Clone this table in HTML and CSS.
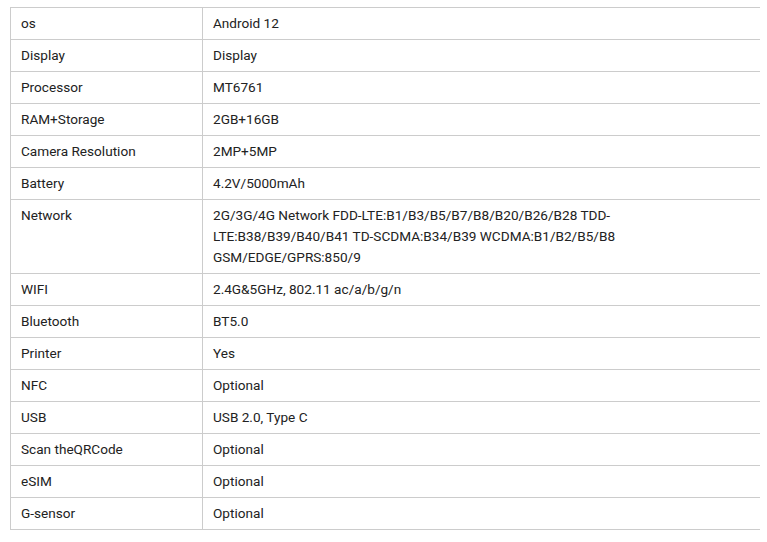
FILE: index.html
```html
<!DOCTYPE html>
<html lang="en">
<head>
  <meta charset="UTF-8" />
  <title>Specifications</title>
  <link rel="stylesheet" href="styles.css">
</head>
<body>
  <div class="spec-wrap">
    <table class="spec-table">
      <colgroup>
        <col class="col-name">
        <col class="col-value">
      </colgroup>
      <tbody>
        <tr><td>os</td><td>Android 12</td></tr>
        <tr><td>Display</td><td>Display</td></tr>
        <tr><td>Processor</td><td>MT6761</td></tr>
        <tr><td>RAM+Storage</td><td>2GB+16GB</td></tr>
        <tr><td>Camera Resolution</td><td>2MP+5MP</td></tr>
        <tr><td>Battery</td><td>4.2V/5000mAh</td></tr>
        <tr><td>Network</td><td><div class="long">2G/3G/4G Network FDD-LTE:B1/B3/B5/B7/B8/B20/B26/B28 TDD-LTE:B38/B39/B40/B41 TD-SCDMA:B34/B39 WCDMA:B1/B2/B5/B8 GSM/EDGE/GPRS:850/9</div></td></tr>
        <tr><td>WIFI</td><td>2.4G&amp;5GHz, 802.11 ac/a/b/g/n</td></tr>
        <tr><td>Bluetooth</td><td>BT5.0</td></tr>
        <tr><td>Printer</td><td>Yes</td></tr>
        <tr><td>NFC</td><td>Optional</td></tr>
        <tr><td>USB</td><td>USB 2.0, Type C</td></tr>
        <tr><td>Scan theQRCode</td><td>Optional</td></tr>
        <tr><td>eSIM</td><td>Optional</td></tr>
        <tr><td>G-sensor</td><td>Optional</td></tr>
      </tbody>
    </table>
  </div>
</body>
</html>
```

FILE: styles.css
```css
* {
  box-sizing: border-box;
  margin: 0;
  padding: 0;
}
html, body {
  background: #fff;
  font-family: Roboto, "Liberation Sans", sans-serif;
  font-size: 13.6px;
  color: #222;
}
body {
  padding: 7px 0 0 10px;
}

.spec-wrap {
  width: 750px;
  overflow: hidden;
}
.spec-table {
  width: 750px;
  table-layout: fixed;
  border-collapse: collapse;
}
.col-name {
  width: 192px;
}
.spec-table td {
  border: 1px solid #ccc;
  padding: 5px 10px;
  line-height: 21px;
  vertical-align: top;
  text-align: left;
}
.spec-table td:last-child {
  border-right: none;
}
.long {
  max-width: 460px;
}
```
